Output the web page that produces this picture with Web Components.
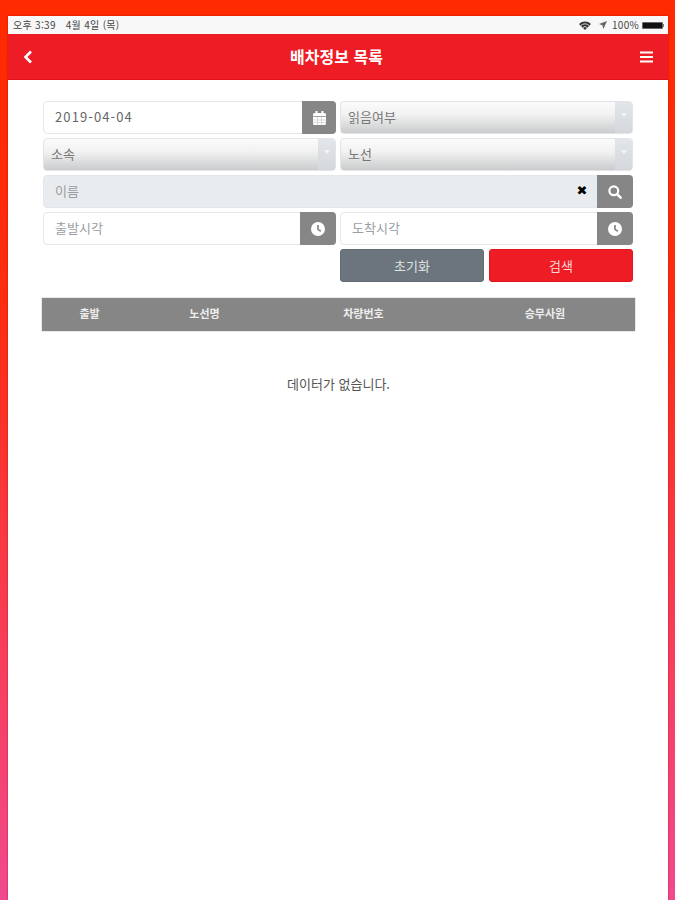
<!DOCTYPE html>
<html lang="ko"><head><meta charset="utf-8"><title>배차정보 목록</title>
<style>
html,body{margin:0;height:900px;overflow:hidden}
body{background:linear-gradient(180deg,#ff2a00 0%,#fb2d12 35%,#f73f60 75%,#f04a8e 100%);font-family:"Noto Sans CJK KR","Noto Sans",sans-serif}
</style></head><body>
<app-screen>
  <status-bar></status-bar>
  <app-header title="배차정보 목록"></app-header>
  <search-form></search-form>
  <data-table></data-table>
</app-screen>
<script>
const FONT='"Noto Sans CJK KR","Noto Sans",sans-serif';
const ICONS={
 cal:'<svg width="13" height="14" viewBox="0 0 13 14"><path fill="#fff" d="M2.500 0h2v2h4V0h2v2h1A1.500 1.500 0 0 1 13 3.500V5H0V3.500A1.500 1.500 0 0 1 1.500 2h1zM0 5.800h13v6.700a1.500 1.500 0 0 1-1.500 1.500h-10A1.500 1.500 0 0 1 0 12.500z"/><path stroke="#c4c4c4" stroke-width=".6" d="M0 9h13M0 11.500h13M4.500 6v8M8.500 6v8"/></svg>',
 clock:'<svg width="14" height="14" viewBox="0 0 14 14"><circle cx="7" cy="7" r="7" fill="#fff"/><path fill="none" stroke="#868686" stroke-width="1.700" d="M7 3v4.400l2.800 1.800"/></svg>',
 search:'<svg width="14" height="14" viewBox="0 0 14 14"><circle cx="5.800" cy="5.800" r="4.400" fill="none" stroke="#fff" stroke-width="2.200"/><path stroke="#fff" stroke-width="2.600" stroke-linecap="round" d="M9.300 9.300l3.300 3.300"/></svg>'
};
function def(name,css,html){
 customElements.define(name,class extends HTMLElement{
  connectedCallback(){
   if(this.shadowRoot)return;
   const r=this.attachShadow({mode:'open'});
   r.innerHTML='<style>'+css+'</style>'+(typeof html==='function'?html(this):html);
  }
 });
}
def('app-screen',`:host{display:flex;flex-direction:column;box-sizing:border-box;width:660px;height:884px;margin:16px 0 0 8px;background:#fff;box-shadow:0 0 2px rgba(150,0,0,.55);color:#444}`,'<slot></slot>');
def('status-bar',`:host{display:flex;align-items:center;justify-content:space-between;height:18px;padding:0 4px 0 5px;background:#f8f8f8;font:10px/18px ${FONT};color:#444;flex:none;letter-spacing:.3px}
 .l{display:flex;gap:10px}.r{display:flex;align-items:center}
 .bat{display:flex;align-items:center;margin-left:3px}.b{width:19px;height:5px;background:#111;border:1px solid #666;border-radius:1px}.t{width:1px;height:3px;background:#777}`,
 `<div class="l"><span>오후 3:39</span><span>4월 4일 (목)</span></div>
 <div class="r"><svg width="12" height="9" viewBox="0 0 12 9"><path fill="#333" d="M6 9L0 3a8.500 8.500 0 0 1 12 0z"/><path stroke="#f8f8f8" stroke-width=".8" fill="none" d="M2 4.500a5.600 5.600 0 0 1 8 0M4 6.500a2.800 2.800 0 0 1 4 0"/></svg>
 <svg style="margin-left:8px" width="8" height="8" viewBox="0 0 9 9"><path fill="#666" d="M9 0L0 3.500l3.800 1.200L5 9z"/></svg>
 <span style="margin-left:5px">100%</span><span class="bat"><span class="b"></span><span class="t"></span></span></div>`);
def('app-header',`:host{display:flex;align-items:center;justify-content:space-between;height:46px;padding:0 15px;background:#ee1c25;color:#fff;flex:none;box-sizing:border-box;border-bottom:1px solid #e2121b}
 b{font:700 16px/1 ${FONT};flex:1;text-align:center;position:relative;top:-1px}
 svg{display:block}`,
 t=>`<svg width="10" height="14" viewBox="0 0 10 14"><path d="M8 1.500L2.500 7 8 12.500" fill="none" stroke="#fff" stroke-width="2.600"/></svg><b>${t.getAttribute('title')}</b>
 <svg width="13" height="12" viewBox="0 0 13 12"><path stroke="#fff" stroke-width="2" d="M0 1.500h13M0 6h13M0 10.500h13"/></svg>`);
def('form-input',`:host{display:flex;height:33px;box-sizing:border-box;border:1px solid #e4e6e9;border-radius:4px;background:#fff;font:13px/30px ${FONT}}
 :host([fill]){background:#e9ecef}
 .v{flex:1;padding-left:var(--pad,11px);color:#9a9ea2;white-space:nowrap}
 :host([value]) .v{color:#666;letter-spacing:1.1px}
 .x{font:700 13px/30px "DejaVu Sans",sans-serif;color:#000;width:30px;text-align:center}
 .i{width:var(--btn,34px);margin:-1px -1px -1px 0;background:#868686;display:flex;align-items:center;justify-content:center;border-radius:0 4px 4px 0}
 svg{display:block}`,
 t=>{const k=t.getAttribute('icon');return `<span class="v">${t.getAttribute('value')||t.getAttribute('placeholder')}</span>${t.hasAttribute('clear')?'<span class="x">✖</span>':''}<span class="i">${ICONS[k]}</span>`});
def('form-select',`:host{display:flex;height:33px;box-sizing:border-box;border:1px solid #e2e4e8;border-radius:4px;overflow:hidden;background:linear-gradient(180deg,#fbfbfb 0%,#f2f2f2 40%,#cacccd 100%);font:13px/30px ${FONT};color:#777}
 .v{flex:1;padding-left:var(--pad,7px)}
 .a{width:17px;background:linear-gradient(180deg,#e2e5e9,#d4d7dc);display:flex;justify-content:center;padding-top:11px;box-sizing:border-box}
 i{width:0;height:0;border:3px solid transparent;border-top:4px solid #f4f5f6;border-bottom:0}`,
 t=>`<span class="v">${t.getAttribute('label')}</span><span class="a"><i></i></span>`);
def('form-btn',`:host{display:block;height:33px;box-sizing:border-box;border-radius:3px;text-align:center;font:13px/31px ${FONT};color:#dfe2e4;background:#6c757d;border:1px solid #626b73}
 :host([primary]){background:#ee1c25;border-color:#e2141d;color:#fbd5d8}`,'<slot></slot>');
def('search-form',`:host{display:grid;grid-template-columns:293px 293px;gap:4px;margin:21px 0 0 35px;flex:none}
 .w{grid-column:1/3}.s{--btn:36px}.btns{grid-column:2;display:grid;grid-template-columns:144px 144px;gap:5px}`,
 `<form-input value="2019-04-04" icon="cal"></form-input>
 <form-select label="읽음여부"></form-select>
 <form-select label="소속"></form-select>
 <form-select label="노선"></form-select>
 <form-input class="w s" fill placeholder="이름" icon="search" clear></form-input>
 <form-input class="s" placeholder="출발시각" icon="clock"></form-input>
 <form-input class="s" placeholder="도착시각" icon="clock"></form-input>
 <div class="btns"><form-btn>초기화</form-btn><form-btn primary>검색</form-btn></div>`);
def('data-table',`:host{display:block;margin:16px 0 0 34px;width:593px;flex:none}
 .h{display:grid;grid-template-columns:95px 135px 183px 180px;height:33px;background:#868686;color:#eee;font:700 11px/31px ${FONT};text-align:center;box-shadow:0 0 1px #777}
 .e{margin-top:44px;text-align:center;font:13px/18px ${FONT};color:#555}`,
 `<div class="h"><span>출발</span><span>노선명</span><span>차량번호</span><span>승무사원</span></div><div class="e">데이터가 없습니다.</div>`);
</script>
</body></html>
